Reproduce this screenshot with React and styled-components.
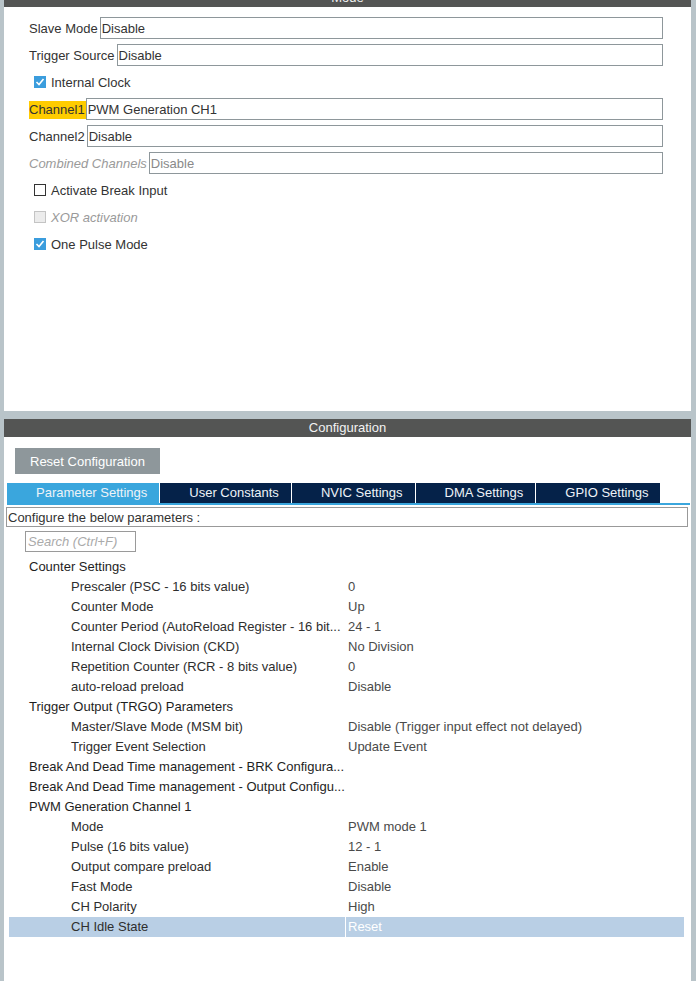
import React from "react"
import styled, { createGlobalStyle } from "styled-components"

const GlobalStyle = createGlobalStyle`
  html, body {
    margin: 0;
    padding: 0;
    background: #b9c4c9;
  }
  body {
    font-family: "Liberation Sans", Arial, sans-serif;
    font-size: 13px;
    color: #333;
  }
`

//page frame with the gray side strips
const Frame = styled.div`
  width: 696px;
  height: 981px;
  box-sizing: border-box;
  padding: 0 5px 0 4px;
  display: flex;
  flex-direction: column;
  gap: 8px;
  overflow: hidden;
`

const Panel = styled.section`
  background: #fff;
  display: flex;
  flex-direction: column;
  height: ${props => props.$height};
  flex: ${props => (props.$grow ? "1" : "none")};
`

const PanelHeader = styled.div`
  height: 18px;
  line-height: 18px;
  margin-top: ${props => props.$offset || 0}px;
  background: #545554;
  color: #f2f2f2;
  text-align: center;
  font-size: 13px;
`

//Mode section
const ModeBody = styled.div`
  display: flex;
  flex-direction: column;
  gap: 5px;
  padding: 10px 28px 0 25px;
`

const FieldRow = styled.div`
  display: flex;
  align-items: center;
  height: 22px;
`

const FieldLabel = styled.span`
  padding-right: ${props => (props.$hl ? "1px" : "2px")};
  line-height: 18px;
  margin-top: 1px;
  white-space: nowrap;
  color: ${props => (props.$muted ? "#9a9a9a" : "#333")};
  font-style: ${props => (props.$muted ? "italic" : "normal")};
  background: ${props => (props.$hl ? "#ffcc00" : "transparent")};
`

const FieldBox = styled.div`
  flex: 1;
  height: 22px;
  box-sizing: border-box;
  border: 1px solid #8e979b;
  padding-left: 1px;
  line-height: 21px;
  color: ${props => (props.$muted ? "#8a8a8a" : "#333")};
`

const CheckRow = styled.label`
  display: flex;
  align-items: center;
  gap: 5px;
  height: 22px;
  padding-left: 5px;
  color: ${props => (props.$disabled ? "#9a9a9a" : "#333")};
  font-style: ${props => (props.$disabled ? "italic" : "normal")};
`

const Box = styled.span`
  width: 12px;
  height: 12px;
  box-sizing: border-box;
  display: flex;
  align-items: center;
  justify-content: center;
  background: ${props => (props.$checked ? "#3b9ddd" : props.$disabled ? "#ececec" : "#fff")};
  border: 1px solid ${props => (props.$checked ? "#3b9ddd" : props.$disabled ? "#c4c4c4" : "#333")};
`

const Checkbox = ({ checked, disabled, children }) => (
  <CheckRow $disabled={disabled}>
    <Box $checked={checked} $disabled={disabled}>
      {checked && (
        <svg width="10" height="10" viewBox="0 0 10 10">
          <polyline points="1.5,5 4,7.5 8.5,2" fill="none" stroke="#fff" strokeWidth="1.6" />
        </svg>
      )}
    </Box>
    {children}
  </CheckRow>
)

//Configuration section
const ResetButton = styled.button`
  align-self: flex-start;
  margin: 11px 0 0 11px;
  height: 26px;
  padding: 0 15px;
  border: none;
  background: #8e979b;
  color: #fff;
  font-family: "Liberation Sans", Arial, sans-serif;
  font-size: 13px;
`

const TabBar = styled.div`
  display: flex;
  margin: 9px 1px 0 3px;
  border-bottom: 2px solid #3aa6dd;
`

const Tab = styled.div`
  height: 20px;
  line-height: 20px;
  padding: 0 12px 0 29px;
  margin-right: 1px;
  color: #eef3f8;
  background: ${props => (props.$active ? "#3aa6dd" : "#052249")};
  white-space: nowrap;
`

const InfoBox = styled.div`
  margin: 2px 3px 0 2px;
  height: 20px;
  box-sizing: border-box;
  border: 1px solid #999;
  line-height: 19px;
  padding-left: 1px;
  color: #333;
`

const Search = styled.div`
  margin: 4px 0 0 21px;
  width: 111px;
  height: 21px;
  box-sizing: border-box;
  border: 1px solid #9a9a9a;
  line-height: 20px;
  padding-left: 2px;
  color: #aaa;
  font-style: italic;
`

const Table = styled.div`
  margin: 5px 7px 0 5px;
  display: flex;
  flex-direction: column;
`

const Row = styled.div`
  display: grid;
  grid-template-columns: 336px 1fr;
  height: 20px;
  line-height: 20px;
  background: ${props => (props.$selected ? "#b9cfe5" : "transparent")};
`

const Name = styled.div`
  padding-left: ${props => (props.$group ? "20px" : "62px")};
  color: ${props => (props.$group ? "#1e1e1e" : "#2e2e2e")};
  white-space: nowrap;
  overflow: hidden;
`

const Value = styled.div`
  border-left: 1px solid ${props => (props.$selected ? "#fff" : "transparent")};
  padding-left: 2px;
  color: ${props => (props.$selected ? "#fff" : "#4a4a4a")};
  white-space: nowrap;
`

const params = [
  { group: true, name: "Counter Settings" },
  { name: "Prescaler (PSC - 16 bits value)", value: "0" },
  { name: "Counter Mode", value: "Up" },
  { name: "Counter Period (AutoReload Register - 16 bit...", value: "24 - 1" },
  { name: "Internal Clock Division (CKD)", value: "No Division" },
  { name: "Repetition Counter (RCR - 8 bits value)", value: "0" },
  { name: "auto-reload preload", value: "Disable" },
  { group: true, name: "Trigger Output (TRGO) Parameters" },
  { name: "Master/Slave Mode (MSM bit)", value: "Disable (Trigger input effect not delayed)" },
  { name: "Trigger Event Selection", value: "Update Event" },
  { group: true, name: "Break And Dead Time management - BRK Configura..." },
  { group: true, name: "Break And Dead Time management - Output Configu..." },
  { group: true, name: "PWM Generation Channel 1" },
  { name: "Mode", value: "PWM mode 1" },
  { name: "Pulse (16 bits value)", value: "12 - 1" },
  { name: "Output compare preload", value: "Enable" },
  { name: "Fast Mode", value: "Disable" },
  { name: "CH Polarity", value: "High" },
  { name: "CH Idle State", value: "Reset", selected: true },
]

const tabs = ["Parameter Settings", "User Constants", "NVIC Settings", "DMA Settings", "GPIO Settings"]

export default function App() {
  return (
    <>
      <GlobalStyle />
      <Frame>
        <Panel $height="411px">
          <PanelHeader $offset={-11}>Mode</PanelHeader>
          <ModeBody>
            <FieldRow>
              <FieldLabel>Slave Mode</FieldLabel>
              <FieldBox>Disable</FieldBox>
            </FieldRow>
            <FieldRow>
              <FieldLabel>Trigger Source</FieldLabel>
              <FieldBox>Disable</FieldBox>
            </FieldRow>
            <Checkbox checked>Internal Clock</Checkbox>
            <FieldRow>
              <FieldLabel $hl>Channel1</FieldLabel>
              <FieldBox>PWM Generation CH1</FieldBox>
            </FieldRow>
            <FieldRow>
              <FieldLabel>Channel2</FieldLabel>
              <FieldBox>Disable</FieldBox>
            </FieldRow>
            <FieldRow>
              <FieldLabel $muted>Combined Channels</FieldLabel>
              <FieldBox $muted>Disable</FieldBox>
            </FieldRow>
            <Checkbox>Activate Break Input</Checkbox>
            <Checkbox disabled>XOR activation</Checkbox>
            <Checkbox checked>One Pulse Mode</Checkbox>
          </ModeBody>
        </Panel>
        <Panel $grow>
          <PanelHeader>Configuration</PanelHeader>
          <ResetButton>Reset Configuration</ResetButton>
          <TabBar>
            {tabs.map((t, i) => (
              <Tab key={t} $active={i === 0}>{t}</Tab>
            ))}
          </TabBar>
          <InfoBox>Configure the below parameters :</InfoBox>
          <Search>Search (Ctrl+F)</Search>
          <Table>
            {params.map((p, i) => (
              <Row key={i} $selected={p.selected}>
                <Name $group={p.group}>{p.name}</Name>
                <Value $selected={p.selected}>{p.value}</Value>
              </Row>
            ))}
          </Table>
        </Panel>
      </Frame>
    </>
  )
}
